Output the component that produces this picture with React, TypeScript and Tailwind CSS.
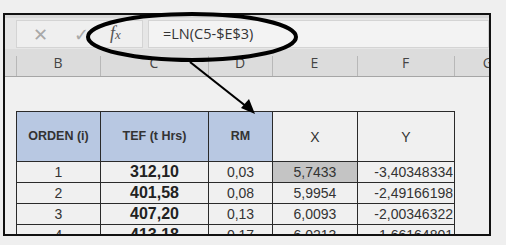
import React from 'react';

const cols = [
  { label: 'B', w: 'w-[84px]' },
  { label: 'C', w: 'w-[108px]' },
  { label: 'D', w: 'w-[64px]' },
  { label: 'E', w: 'w-[85px]' },
  { label: 'F', w: 'w-[97px]' },
];

const rows = [
  ['1', '312,10', '0,03', '5,7433', '-3,40348334'],
  ['2', '401,58', '0,08', '5,9954', '-2,49166198'],
  ['3', '407,20', '0,13', '6,0093', '-2,00346322'],
  ['4', '413,18', '0,17', '6,0213', '-1,66164801'],
];

function FormulaBar() {
  return (
    <div className="flex h-[34px] shrink-0 items-center bg-[#e6e6e6] pl-[11px] border-t-[3px] border-[#d8d8d8]">
      {/* cancel / enter / fx */}
      <div className="flex h-[28px] w-[127px] items-center border border-[#d4d4d4] bg-[#efefef] text-[#a8a8a8]">
        <span className="ml-[16px] text-[18px] leading-none">✕</span>
        <span className="ml-[26px] text-[18px] leading-none">✓</span>
        <span className="ml-[21px] text-[18px] italic text-[#555] [font-family:'Liberation_Serif',serif]">
          f<span className="text-[13px]">x</span>
        </span>
      </div>
      <div className="ml-[5px] flex h-[28px] flex-1 items-center border border-[#d4d4d4] bg-[#f3f3f3] pl-[14px] text-[14.5px] text-[#333] [font-family:'Open_Sans',sans-serif]">
        =LN(C5-$E$3)
      </div>
    </div>
  );
}

function ColumnHeaders() {
  return (
    <div className="flex h-[28px] shrink-0 bg-[#dcdcdc] pl-[11px] border-b border-[#a6a6a6] text-[14px] text-[#444] [font-family:'Open_Sans',sans-serif]">
      {cols.map((c) => (
        <div key={c.label} className={`${c.w} relative flex items-center justify-center`}>
          <span className="absolute left-0 bottom-0 h-[20px] w-px bg-[#b8b8b8]" />
          {c.label}
        </div>
      ))}
      <div className="relative flex flex-1 items-center justify-end">
        <span className="absolute left-0 bottom-0 h-[20px] w-px bg-[#b8b8b8]" />
        <span className="mr-[-4px]">G</span>
      </div>
    </div>
  );
}

function DataTable() {
  const cell = 'border border-[#2a2a2a] h-[21px] p-0 leading-none overflow-hidden whitespace-nowrap';
  return (
    <table className="ml-[11px] mt-[34px] w-[438px] table-fixed border-collapse text-[#333] [font-family:'Liberation_Sans',Arial,sans-serif]">
      <colgroup>
        <col className="w-[84px]" />
        <col className="w-[108px]" />
        <col className="w-[64px]" />
        <col className="w-[85px]" />
        <col className="w-[97px]" />
      </colgroup>
      <thead>
        <tr className="h-[50px] text-[12.5px] font-bold">
          <th className={`${cell} bg-[#b8c8e2]`}>ORDEN (i)</th>
          <th className={`${cell} bg-[#b8c8e2]`}>TEF (t Hrs)</th>
          <th className={`${cell} bg-[#b8c8e2]`}>RM</th>
          <th className={`${cell} bg-[#f0f0f0] font-normal text-[14px]`}>X</th>
          <th className={`${cell} bg-[#f0f0f0] font-normal text-[14px]`}>Y</th>
        </tr>
      </thead>
      <tbody className="text-[14px]">
        {rows.map((r, i) => (
          <tr key={i} className="h-[21px]">
            <td className={`${cell} text-center`}>{r[0]}</td>
            <td className={`${cell} text-center text-[16px] font-bold text-[#222]`}>{r[1]}</td>
            <td className={`${cell} text-center`}>{r[2]}</td>
            <td className={`${cell} text-center ${i === 0 ? 'bg-[#c4c4c4]' : ''}`}>{r[3]}</td>
            <td className={`${cell} text-right pr-[1px]`}>{r[4]}</td>
          </tr>
        ))}
      </tbody>
    </table>
  );
}

export default function App() {
  return (
    <div className="relative h-[245px] w-[506px] overflow-hidden bg-[#efefef]">
      <div className="ml-[3px] mt-[13px] flex h-[223px] w-[488px] flex-col overflow-hidden border-2 border-[#111] bg-[#f0f0f0]">
        <FormulaBar />
        <ColumnHeaders />
        <DataTable />
      </div>

      {/* callout drawn over the sheet */}
      <svg className="pointer-events-none absolute left-0 top-0" width="506" height="245">
        <ellipse cx="192" cy="37" rx="104" ry="23" fill="none" stroke="#000" strokeWidth="4" />
        <line x1="190" y1="62" x2="247" y2="107" stroke="#000" strokeWidth="2.2" />
        <polygon points="255,114 241,108 249,99" fill="#000" />
      </svg>
    </div>
  );
}
